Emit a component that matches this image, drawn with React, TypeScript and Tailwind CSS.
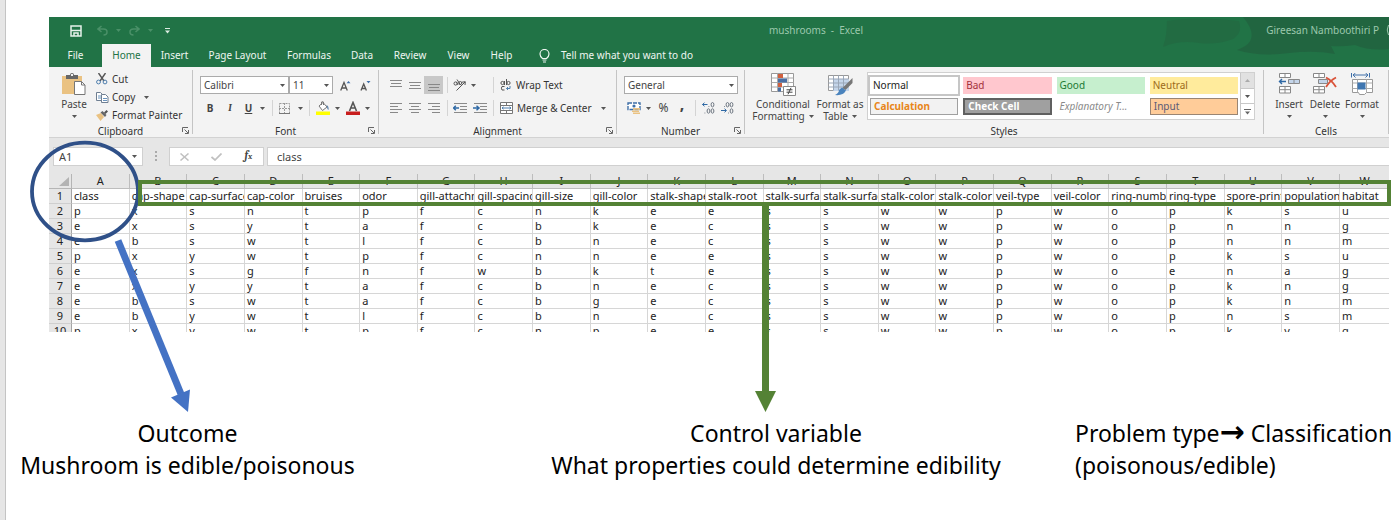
import React from "react";

const COLUMNS = "ABCDEFGHIJKLMNOPQRSTUVW".split("");

const ROWS: string[][] = [
  [
    "class", "cap-shape", "cap-surface", "cap-color", "bruises", "odor", "gill-attachment", "gill-spacing",
    "gill-size", "gill-color", "stalk-shape", "stalk-root", "stalk-surface", "stalk-surface", "stalk-color",
    "stalk-color", "veil-type", "veil-color", "ring-number", "ring-type", "spore-print", "population", "habitat",
  ],
  "pxsntpfcnkeesswwpwopksu".split(""),
  "exsytafcbkecsswwpwopnng".split(""),
  "ebswtlfcbnecsswwpwopnnm".split(""),
  "pxywtpfcnneesswwpwopksu".split(""),
  "exsgfnfwbktesswwpwoenag".split(""),
  "exyytafcbnecsswwpwopkng".split(""),
  "ebswtafcbgecsswwpwopknm".split(""),
  "ebywtlfcbnecsswwpwopnsm".split(""),
  "pxywtpfcnpeesswwpwopkvg".split(""),
];

const TABS = [
  { label: "File", width: "w-[53px]" },
  { label: "Home", width: "w-[49px]" },
  { label: "Insert", width: "w-[47px]" },
  { label: "Page Layout", width: "w-[79px]" },
  { label: "Formulas", width: "w-[64px]" },
  { label: "Data", width: "w-[42px]" },
  { label: "Review", width: "w-[54px]" },
  { label: "View", width: "w-[43px]" },
  { label: "Help", width: "w-[43px]" },
];

const STYLES = [
  { label: "Normal", look: "bg-white text-[#222] outline-2 outline-[#c6c6c6]" },
  { label: "Bad", look: "bg-[#ffc7ce] text-[#a3313b]" },
  { label: "Good", look: "bg-[#c6efce] text-[#217a34]" },
  { label: "Neutral", look: "bg-[#ffeb9c] text-[#9c6a1a]" },
  { label: "Calculation", look: "bg-[#f2f2f2] font-bold text-[#e8861a] border border-[#a0a0a0]" },
  { label: "Check Cell", look: "bg-[#a0a0a0] font-bold text-white border-2 border-[#606060]" },
  { label: "Explanatory T...", look: "italic text-[#8a8a8a]" },
  { label: "Input", look: "bg-[#ffcc99] text-[#5a5a76] border border-[#9a8573]" },
];

function Caret({ className = "text-[#555]" }: { className?: string }) {
  return (
    <svg width="5" height="3" viewBox="0 0 5 3" className={`shrink-0 ${className}`} aria-hidden="true">
      <path d="M0 0h5L2.5 3z" fill="currentColor" />
    </svg>
  );
}

function Launcher() {
  return (
    <svg width="7" height="7" viewBox="0 0 7 7" fill="none" stroke="#666" aria-hidden="true">
      <path d="M.5 5V.5H6M2.5 2.5L6 6M6.5 3v3.5H3" />
    </svg>
  );
}

function Divider() {
  return <span className="h-4 w-px shrink-0 bg-[#d4d4d4]" />;
}

function Group({
  title, width, launcher, children,
}: { title: string; width: string; launcher?: boolean; children: React.ReactNode }) {
  return (
    <section aria-label={title} className={`flex shrink-0 pt-[3px] ${width}`}>
      <div className="flex min-w-0 flex-1 flex-col">
        <div className="flex-1">{children}</div>
        <div className="relative flex h-3 items-center justify-center leading-3 text-[#333]">
          {title}
          {launcher && (
            <button aria-label={`${title} settings`} className="absolute right-[3px] top-[2px]">
              <Launcher />
            </button>
          )}
        </div>
      </div>
      <span className="mb-[3px] w-px bg-[#c4c4c4]" />
    </section>
  );
}

function Combo({ label, value, width }: { label: string; value: string; width: string }) {
  return (
    <div className={`relative h-[18px] ${width}`}>
      <select
        aria-label={label}
        defaultValue={value}
        className="h-full w-full appearance-none border border-[#ababab] bg-white px-[3px] leading-4 text-[#444]"
      >
        <option>{value}</option>
      </select>
      <span className="pointer-events-none absolute right-1 top-2">
        <Caret />
      </span>
    </div>
  );
}

function IconButton({ label, className = "", children }: { label: string; className?: string; children: React.ReactNode }) {
  return (
    <button aria-label={label} className={`flex h-[18px] shrink-0 items-center justify-center ${className}`}>
      {children}
    </button>
  );
}

function Lines({ ys, xs }: { ys: number[]; xs: [number, number][] }) {
  return (
    <svg width="12" height="12" viewBox="0 0 12 12" stroke="#888" aria-hidden="true">
      {ys.map((y, i) => (
        <path key={y} d={`M${xs[i][0]} ${y}.5H${xs[i][1]}`} />
      ))}
    </svg>
  );
}

function PasteIcon() {
  return (
    <svg width="24" height="22" viewBox="0 0 24 22" aria-hidden="true">
      <path d="M0 3h20v18H0z" fill="#eac282" />
      <path d="M4 2h4a2 2 0 0 1 4 0h4v4H4z" fill="#666" />
      <path d="M9 1h2v2H9z" fill="#f3f3f3" />
      <path d="M12.500 8.500h7l3.500 3.500v9.500h-10.500z" fill="#fff" stroke="#777" />
      <path d="M19.500 8.500v3.500H23" fill="none" stroke="#777" />
    </svg>
  );
}

function CutIcon() {
  return (
    <svg width="12" height="12" viewBox="0 0 12 12" fill="none" aria-hidden="true">
      <path d="M2.500 0l5.500 8M9.500 0L4 8" stroke="#555" strokeWidth="1.400" />
      <circle cx="2.500" cy="9" r="1.900" stroke="#4f7fae" />
      <circle cx="9" cy="9" r="1.900" stroke="#4f7fae" />
    </svg>
  );
}

function CopyIcon() {
  return (
    <svg width="13" height="11" viewBox="0 0 13 11" fill="#fff" stroke="#6f7f92" aria-hidden="true">
      <path d="M.5 .5h4l2 2v6h-6z" />
      <path d="M2 4h3M2 6h3" stroke="#6b94bd" />
      <path d="M5.500 2.500h4l2.500 2.500v5.500H5.500z" />
      <path d="M7 6.500h4M7 8.500h4" stroke="#6b94bd" />
    </svg>
  );
}

function PainterIcon() {
  return (
    <svg width="12" height="11" viewBox="0 0 12 11" aria-hidden="true">
      <path d="M0 5l5-2 3 4-3.500 4z" fill="#eac282" />
      <path d="M4.500 2.500L6.500 1l4 4-1.500 2z" fill="#666" />
      <path d="M8 2.500L10.500 0 12 1.500 9.500 4z" fill="#555" />
    </svg>
  );
}

function BordersIcon() {
  return (
    <svg width="11" height="11" viewBox="0 0 11 11" fill="none" stroke="#999" aria-hidden="true">
      <path d="M.5 .5h10v10H.5zM5.500 0v11M0 5.500h11" strokeDasharray="2 1" />
      <path d="M0 10.500h11" stroke="#777" />
    </svg>
  );
}

function FillIcon() {
  return (
    <svg width="14" height="14" viewBox="0 0 14 14" fill="none" aria-hidden="true">
      <path d="M3 5l4-3.500L11 6 6.500 9.500z" fill="#fff" stroke="#777" />
      <path d="M5.500 4V1q1-1 2 0v3" stroke="#777" />
      <path d="M10 4q3 .5 2.500 5-1.500-1-1.500-4z" fill="#4a76a5" />
      <path d="M0 10.500h14v3.500H0z" fill="#ffff00" />
    </svg>
  );
}

function FontColorIcon() {
  return (
    <svg width="14" height="14" viewBox="0 0 14 14" fill="none" aria-hidden="true">
      <path d="M3.500 10L7 1.500 10.500 10M4.700 7h4.600" stroke="#555" strokeWidth="1.600" />
      <path d="M0 10.500h14v3.500H0z" fill="#c81e1e" />
    </svg>
  );
}

function GrowIcon({ down }: { down?: boolean }) {
  return (
    <svg width="11" height="11" viewBox="0 0 11 11" fill="none" aria-hidden="true">
      {down ? (
        <path d="M1 10.500l2.700-6.500 2.700 6.500M2 8.500h3.500" stroke="#555" strokeWidth="1.300" />
      ) : (
        <path d="M.7 10.500L4 2.500l3.300 8M2 8h4" stroke="#555" strokeWidth="1.300" />
      )}
      {down ? <path d="M6.500 1h4L8.500 3.200z" fill="#3f6fa8" /> : <path d="M6.500 3.200h4L8.500 1z" fill="#3f6fa8" />}
    </svg>
  );
}

function OrientationIcon() {
  return (
    <svg width="13" height="12" viewBox="0 0 13 12" fill="none" stroke="#555" aria-hidden="true">
      <path d="M3.500 11.500L12 3M9 3.200L12.300 2.700 12 6" />
      <circle cx="2.600" cy="4.500" r="1.600" />
      <path d="M3.500 3l1.500 3M4 .5L7.500 6" />
      <circle cx="7.300" cy="4" r="1.500" />
    </svg>
  );
}

function IndentIcon({ right }: { right?: boolean }) {
  return (
    <svg width="14" height="11" viewBox="0 0 14 11" fill="none" stroke="#8a8a8a" aria-hidden="true">
      <path d="M1 .5h13M7 3.500h7M7 6.500h7M1 9.500h13" />
      <path
        d={right ? "M0 5h5.500M3.500 2.800L6 5 3.500 7.200" : "M6 5H.5M2.800 2.800L.5 5 2.800 7.200"}
        stroke="#2f69a5"
        strokeWidth="1.500"
      />
    </svg>
  );
}

function WrapIcon() {
  return (
    <svg width="12" height="12" viewBox="0 0 12 12" fill="none" stroke="#555" aria-hidden="true">
      <circle cx="2.500" cy="4" r="1.600" />
      <path d="M4.500 2v4M6.500 0v6" />
      <circle cx="8.500" cy="4" r="1.600" />
      <path d="M4.500 7.500H2q-1.200 1.600 0 3.500h2.500" />
      <path d="M10 7v2.500H6.500M8 8L6.500 9.500 8 11" stroke="#4f7fae" />
    </svg>
  );
}

function MergeIcon() {
  return (
    <svg width="13" height="12" viewBox="0 0 13 12" fill="#fff" stroke="#777" aria-hidden="true">
      <path d="M.5 .5h12v11H.5zM.5 3.500h12M.5 8.500h12M6.500 .5v3M6.500 8.500v3" />
      <path d="M2 6h9M3.500 4.800L2 6l1.500 1.200M9.500 4.800L11 6 9.500 7.200" stroke="#4f7fae" fill="none" />
    </svg>
  );
}

function CurrencyIcon() {
  return (
    <svg width="14" height="12" viewBox="0 0 14 12" fill="none" aria-hidden="true">
      <path d="M1 1h12v6.500H1z" fill="#fff" stroke="#3f6fa8" strokeWidth="1.400" strokeDasharray="4 1" />
      <circle cx="7" cy="4" r="1.600" fill="#3f6fa8" />
      <path d="M6 6h7v1.800H6zM5 8.500h7v1.400H5zM6 10.500h7V12H6z" fill="#eac282" />
    </svg>
  );
}

function DecimalIcon({ decrease }: { decrease?: boolean }) {
  return (
    <svg width="13" height="12" viewBox="0 0 13 12" fill="none" stroke="#6c7580" aria-hidden="true">
      {decrease ? (
        <>
          <path d="M3 4.500h.8" />
          <ellipse cx="6.500" cy="2.700" rx="1.400" ry="2.200" />
          <ellipse cx="10.500" cy="2.700" rx="1.400" ry="2.200" />
          <ellipse cx="10.500" cy="9" rx="1.400" ry="2.200" />
          <path d="M7 11h.8" />
          <path d="M0 8.500h5M3.500 6.700l2 1.800-2 1.800" stroke="#2f69a5" />
        </>
      ) : (
        <>
          <path d="M6.500 4.500h.8M2.500 11h.8" />
          <ellipse cx="10.500" cy="2.700" rx="1.400" ry="2.200" />
          <ellipse cx="6.500" cy="9" rx="1.400" ry="2.200" />
          <ellipse cx="10.500" cy="9" rx="1.400" ry="2.200" />
          <path d="M5.500 2.500h-5M2.500 .7l-2 1.800 2 1.800" stroke="#2f69a5" />
        </>
      )}
    </svg>
  );
}

function ConditionalIcon() {
  return (
    <svg width="25" height="23" viewBox="0 0 25 23" aria-hidden="true">
      <path d="M.5 .5h22v18H.5z" fill="#fff" stroke="#999" />
      <path d="M.5 5h22M.5 9.500h22M.5 14h22M6.500 .5v18M17 .5v18" stroke="#aaa" fill="none" />
      <path d="M7 1h5v4H7zM7 10h4v4H7z" fill="#d0603f" />
      <path d="M7 5.500h9v4H7zM7 14.500h3v4H7z" fill="#4a6ea3" />
      <path d="M12.500 13.500h12v9h-12z" fill="#fff" stroke="#888" />
      <path d="M15.500 16.800h6M15.500 19.200h6M20 14.800l-3 6.500" stroke="#444" fill="none" />
    </svg>
  );
}

function TableIcon() {
  return (
    <svg width="25" height="23" viewBox="0 0 25 23" aria-hidden="true">
      <path d="M.5 2.500h20v15H.5z" fill="#fff" stroke="#999" />
      <path d="M5 6h16v12H5z" fill="#c4d5ea" />
      <path d="M.5 6h20M.5 10h20M.5 14h20M5.500 2.500v15M10.500 2.500v15M15.500 2.500v15" stroke="#9aa7b8" fill="none" />
      <path d="M24.500 5v5l-7 7-3-2z" fill="#777" />
      <path d="M14 14.500l4 3q-3 5.500-11 4.500 4-2 4-5z" fill="#4a83bd" />
    </svg>
  );
}

function InsertCellsIcon() {
  return (
    <svg width="22" height="21" viewBox="0 0 22 21" fill="#fff" stroke="#888" aria-hidden="true">
      <path d="M1.500 .5h11v4h-11zM7 .5v4" />
      <path d="M10.500 6.500h11v4h-11zM16 6.500v4" fill="#c4d5ea" />
      <path d="M1.500 13.500h11v6.500h-11zM7 13.500V20M1.500 16.700h11" />
      <path d="M8 8.500H1.500M4 6L1.500 8.500 4 11" fill="none" stroke="#2f69a5" strokeWidth="1.400" />
    </svg>
  );
}

function DeleteCellsIcon() {
  return (
    <svg width="24" height="21" viewBox="0 0 24 21" fill="#fff" stroke="#888" aria-hidden="true">
      <path d="M.5 .5h11v4H.5zM6 .5v4" />
      <path d="M5.500 6.500h9v4h-9z" fill="#c4d5ea" />
      <path d="M.5 13.500h11v6.500H.5zM6 13.500V20M.5 16.700h11" />
      <path d="M13 4.500q6 3 10 9.500M23 4.500q-6 3-10 9.500" fill="none" stroke="#d9533a" strokeWidth="1.800" />
    </svg>
  );
}

function FormatCellsIcon() {
  return (
    <svg width="23" height="23" viewBox="0 0 23 23" fill="none" aria-hidden="true">
      <path d="M.5 0v4.500M18.500 0v4.500M2 2h15M4.500 0L2 2l2.500 2.500M14.500 0L17 2l-2.500 2.500" stroke="#3f6fa8" />
      <path d="M1.500 6.500h20v13h-6l-2 2h-5l-1-2h-6z" fill="#fff" stroke="#999" />
      <path d="M1.500 10h20M1.500 15.500h20M6.500 6.500v13M15.500 6.500v13" stroke="#aaa" />
      <path d="M6.500 9.500h8v7h-8z" fill="#3f76b0" />
    </svg>
  );
}

function BigButton({ icon, lines, width }: { icon: React.ReactNode; lines: string[]; width: string }) {
  const two = lines.length > 1;
  return (
    <button className={`flex flex-col items-center pt-[3px] leading-3 text-[#444] ${width}`}>
      <span className="flex h-6">{icon}</span>
      <span className="whitespace-nowrap pt-px">{lines[0]}</span>
      {two ? (
        <span className="flex items-center gap-1 whitespace-nowrap">
          {lines[1]}
          <Caret />
        </span>
      ) : (
        <span className="flex h-3 items-center">
          <Caret />
        </span>
      )}
    </button>
  );
}

function TitleBar() {
  return (
    <header className="relative flex h-[27px] items-center text-[#9cc8ad]">
      <svg className="absolute right-0 top-0" width="230" height="50" viewBox="0 0 230 50" fill="#23593c" aria-hidden="true">
        <path d="M8 4q30-5 72 0 4 12-6 18-16 6-34 4-20-3-36 4 4-12 4-26z" opacity=".3" />
        <path d="M84 0h146v32q-20 2-34-4-14 2-24 1l4 8q-20-4-46-1-30 4-52-3 26-9 6-33z" opacity=".55" />
        <path d="M229.500 8q-2.500 5 0 10" fill="none" stroke="#9cc8ad" />
      </svg>
      <div className="relative flex w-[720px] items-center">
        <button aria-label="Save" className="ml-[21px]">
          <svg width="12" height="12" viewBox="0 0 12 12" fill="none" stroke="#e6f2ea" strokeWidth="1.500">
            <path d="M1 1h10v10H1zM1 5.500h10M4 11V8h4v3" />
          </svg>
        </button>
        <button aria-label="Undo" className="ml-[15px] flex items-center gap-2 text-[#4a9068]">
          <svg width="11" height="11" viewBox="0 0 11 11" fill="none" stroke="currentColor" strokeWidth="1.500">
            <path d="M4.500 1L1 4l3.500 3M1 4h5.500q3.500 0 3.500 3t-3.500 3" />
          </svg>
          <Caret className="" />
        </button>
        <button aria-label="Redo" className="ml-2 flex items-center gap-2 text-[#4a9068]">
          <svg width="11" height="11" viewBox="0 0 11 11" fill="none" stroke="currentColor" strokeWidth="1.500">
            <path d="M6.500 1L10 4 6.500 7M10 4H4.500Q1 4 1 7t3.500 3" />
          </svg>
          <Caret className="" />
        </button>
        <button aria-label="Customize toolbar" className="ml-3">
          <svg width="5" height="6" viewBox="0 0 5 6" fill="#dcece2">
            <path d="M0 0h5v1H0zM0 2.500h5L2.500 5.500z" />
          </svg>
        </button>
      </div>
      <h1 className="relative whitespace-pre">mushrooms  -  Excel</h1>
      <span className="relative ml-auto mr-[10px] whitespace-nowrap">Gireesan Namboothiri P</span>
    </header>
  );
}

function TabBar() {
  return (
    <nav className="relative flex h-[23px] items-stretch text-[#eef6f1]">
      {TABS.map((tab) => (
        <button
          key={tab.label}
          className={`${tab.width} ${tab.label === "Home" ? "bg-[#f3f3f3] text-[#217346]" : ""} shrink-0 whitespace-nowrap`}
        >
          {tab.label}
        </button>
      ))}
      <button className="ml-4 flex items-center gap-[11px] whitespace-nowrap">
        <svg width="11" height="14" viewBox="0 0 11 14" fill="none" stroke="#eef6f1" strokeWidth="1.200" aria-hidden="true">
          <path d="M3.500 9.500Q1 7.500 1 5a4.500 4.500 0 0 1 9 0q0 2.500-2.500 4.500zM3.500 11h4M4 13h3" />
        </svg>
        Tell me what you want to do
      </button>
    </nav>
  );
}

function Ribbon() {
  return (
    <div className="flex h-[71px] border-b border-[#d2d2d2] bg-[#f3f3f3]">
      <Group title="Clipboard" width="w-[144px]" launcher>
        <div className="flex pl-[10px]">
          <BigButton icon={<PasteIcon />} lines={["Paste"]} width="w-[30px]" />
          <div className="flex flex-col pl-[7px] leading-[18px] text-[#333]">
            <button className="flex items-center gap-1">
              <CutIcon />
              Cut
            </button>
            <button className="flex items-center gap-[3px]">
              <CopyIcon />
              Copy
              <span className="pl-[6px]">
                <Caret />
              </span>
            </button>
            <button className="flex items-center gap-1 whitespace-nowrap">
              <PainterIcon />
              Format Painter
            </button>
          </div>
        </div>
      </Group>

      <Group title="Font" width="w-[186px]" launcher>
        <div className="flex flex-col gap-[5px] pl-[7px] pt-[6px]">
          <div className="flex items-center">
            <Combo label="Font name" value="Calibri" width="w-[89px]" />
            <Combo label="Font size" value="11" width="w-[44px]" />
            <IconButton label="Increase font size" className="ml-[6px] w-3">
              <GrowIcon />
            </IconButton>
            <IconButton label="Decrease font size" className="ml-2 w-3">
              <GrowIcon down />
            </IconButton>
          </div>
          <div className="flex items-center text-[#444]">
            <IconButton label="Bold" className="w-5 font-bold">B</IconButton>
            <IconButton label="Italic" className="w-5 font-serif font-bold italic">I</IconButton>
            <IconButton label="Underline" className="w-[30px] gap-2 font-bold">
              <span className="underline">U</span>
              <Caret />
            </IconButton>
            <span className="w-[2px]" />
            <Divider />
            <IconButton label="Borders" className="w-9 gap-2">
              <BordersIcon />
              <Caret />
            </IconButton>
            <Divider />
            <IconButton label="Fill color" className="w-9 gap-[5px]">
              <FillIcon />
              <Caret />
            </IconButton>
            <IconButton label="Font color" className="w-6 gap-[5px]">
              <FontColorIcon />
              <Caret />
            </IconButton>
          </div>
        </div>
      </Group>

      <Group title="Alignment" width="w-[238px]" launcher>
        <div className="flex flex-col gap-[5px] pl-[7px] pt-[6px] text-[#333]">
          <div className="flex items-center">
            <IconButton label="Top align" className="w-[19px]">
              <Lines ys={[1, 4, 7]} xs={[[0, 12], [1, 11], [0, 12]]} />
            </IconButton>
            <IconButton label="Middle align" className="w-[19px]">
              <Lines ys={[3, 6, 9]} xs={[[0, 12], [1, 11], [0, 12]]} />
            </IconButton>
            <IconButton label="Bottom align" className="w-[19px] bg-[#c8c8c8]">
              <Lines ys={[5, 8, 11]} xs={[[0, 12], [1, 11], [0, 12]]} />
            </IconButton>
            <span className="w-1" />
            <Divider />
            <IconButton label="Orientation" className="w-[33px] gap-[5px]">
              <OrientationIcon />
              <Caret />
            </IconButton>
            <span className="w-3" />
            <Divider />
            <button className="ml-[6px] flex h-[18px] items-center gap-1 whitespace-nowrap">
              <WrapIcon />
              Wrap Text
            </button>
          </div>
          <div className="flex items-center">
            <IconButton label="Align left" className="w-[19px]">
              <Lines ys={[1, 4, 7, 10]} xs={[[0, 12], [0, 8], [0, 12], [0, 8]]} />
            </IconButton>
            <IconButton label="Center" className="w-[19px]">
              <Lines ys={[1, 4, 7, 10]} xs={[[0, 12], [2, 10], [0, 12], [2, 10]]} />
            </IconButton>
            <IconButton label="Align right" className="w-[19px]">
              <Lines ys={[1, 4, 7, 10]} xs={[[0, 12], [4, 12], [0, 12], [4, 12]]} />
            </IconButton>
            <span className="w-1" />
            <Divider />
            <IconButton label="Decrease indent" className="w-6">
              <IndentIcon />
            </IconButton>
            <IconButton label="Increase indent" className="w-[15px]">
              <IndentIcon right />
            </IconButton>
            <span className="w-[6px]" />
            <Divider />
            <button className="ml-[6px] flex h-[18px] items-center gap-1 whitespace-nowrap">
              <MergeIcon />
              Merge &amp; Center
              <span className="pl-[5px]">
                <Caret />
              </span>
            </button>
          </div>
        </div>
      </Group>

      <Group title="Number" width="w-[128px]" launcher>
        <div className="flex flex-col gap-[5px] pl-[7px] pt-[6px]">
          <Combo label="Number format" value="General" width="w-[114px]" />
          <div className="flex items-center text-[#444]">
            <IconButton label="Accounting format" className="w-[30px] gap-[5px]">
              <CurrencyIcon />
              <Caret />
            </IconButton>
            <IconButton label="Percent style" className="w-[19px] text-xs">%</IconButton>
            <IconButton label="Comma style" className="w-[18px] pb-2 text-base font-bold">,</IconButton>
            <span className="w-[4px]" />
            <Divider />
            <IconButton label="Increase decimal" className="w-6">
              <DecimalIcon />
            </IconButton>
            <IconButton label="Decrease decimal" className="w-[14px]">
              <DecimalIcon decrease />
            </IconButton>
          </div>
        </div>
      </Group>

      <Group title="Styles" width="min-w-[518px] flex-1">
        <div className="flex pl-2">
          <BigButton icon={<ConditionalIcon />} lines={["Conditional", "Formatting"]} width="w-[60px]" />
          <BigButton icon={<TableIcon />} lines={["Format as", "Table"]} width="w-[54px]" />
          <div className="mr-2 mt-[2px] flex h-12 flex-1 border border-[#d0d0d0] bg-white">
            <div className="grid flex-1 grid-cols-4 gap-x-[5px] gap-y-[4px] px-[2px] pt-1 pb-1">
              {STYLES.map((style) => (
                <button
                  key={style.label}
                  className={`flex h-[17px] items-center overflow-hidden whitespace-nowrap px-[3px] text-left ${style.look}`}
                >
                  {style.label}
                </button>
              ))}
            </div>
            <div className="flex w-[14px] flex-col divide-y divide-[#c8c8c8] border-l border-[#c8c8c8]">
              <button aria-label="Previous styles" className="flex flex-1 items-center justify-center bg-[#e1e1e1]">
                <svg width="5" height="3" viewBox="0 0 5 3" fill="#aaa"><path d="M0 3h5L2.500 0z" /></svg>
              </button>
              <button aria-label="Next styles" className="flex flex-1 items-center justify-center">
                <Caret />
              </button>
              <button aria-label="All styles" className="flex flex-1 items-center justify-center">
                <svg width="7" height="6" viewBox="0 0 7 6" fill="#666"><path d="M0 0h7v1H0zM1 2.500h5L3.500 5.500z" /></svg>
              </button>
            </div>
          </div>
        </div>
      </Group>

      <Group title="Cells" width="w-[125px]">
        <div className="flex pl-[7px]">
          <BigButton icon={<InsertCellsIcon />} lines={["Insert"]} width="w-9" />
          <BigButton icon={<DeleteCellsIcon />} lines={["Delete"]} width="w-9" />
          <BigButton icon={<FormatCellsIcon />} lines={["Format"]} width="w-[38px]" />
        </div>
      </Group>
    </div>
  );
}

function FormulaBar() {
  return (
    <div className="flex h-[28px] items-end bg-[#e6e6e6] pl-1 text-[#444]">
      <div className="relative h-[19px] w-[90px]">
        <input
          aria-label="Name box"
          defaultValue="A1"
          className="h-full w-full border border-[#d0d0d0] bg-white px-[5px] text-[11px]"
        />
        <span className="pointer-events-none absolute right-[6px] top-2">
          <Caret />
        </span>
      </div>
      <svg width="2" height="10" viewBox="0 0 2 10" fill="#aaa" className="mx-3 mb-[5px]" aria-hidden="true">
        <path d="M0 0h2v2H0zM0 4h2v2H0zM0 8h2v2H0z" />
      </svg>
      <div className="mr-[3px] flex h-[19px] w-[95px] items-center justify-between border border-[#d0d0d0] bg-white pl-[10px] pr-[11px]">
        <button aria-label="Cancel">
          <svg width="9" height="8" viewBox="0 0 9 8" fill="none" stroke="#c0c0c0" strokeWidth="1.500"><path d="M.5 .5l8 7M8.500 .5l-8 7" /></svg>
        </button>
        <button aria-label="Enter">
          <svg width="11" height="8" viewBox="0 0 11 8" fill="none" stroke="#c0c0c0" strokeWidth="1.700"><path d="M.5 4l3.500 3L10.500 .5" /></svg>
        </button>
        <button aria-label="Insert function" className="font-serif text-[11px] font-bold italic leading-3">
          f<span className="text-[8px]">x</span>
        </button>
      </div>
      <input
        aria-label="Formula"
        defaultValue="class"
        className="h-[19px] min-w-0 flex-1 border border-r-0 border-[#d0d0d0] bg-white px-[9px] text-[11px]"
      />
    </div>
  );
}

function Sheet() {
  return (
    <div className="h-[166px] overflow-hidden bg-[#e6e6e6] pt-2 text-[11px] leading-[14px] text-[#222]">
      <table className="w-full table-fixed border-separate border-spacing-0 bg-white">
        <colgroup>
          <col className="w-[23px]" />
          {COLUMNS.map((c) => (
            <col key={c} className={c === "W" ? "w-[49px]" : ""} />
          ))}
        </colgroup>
        <thead>
          <tr className="h-[15px] bg-[#e6e6e6]">
            <th aria-label="Select all" className="border-b border-r border-[#b5b5b5] p-0">
              <svg width="10" height="9" viewBox="0 0 10 9" className="ml-[10px]" aria-hidden="true">
                <path d="M10 0v9H0z" fill="#b3b3b3" />
              </svg>
            </th>
            {COLUMNS.map((c) => (
              <th key={c} scope="col" className="border-b border-r border-[#bdbdbd] p-0 font-normal last:border-r-0">
                {c}
              </th>
            ))}
          </tr>
        </thead>
        <tbody>
          {ROWS.map((row, r) => (
            <tr key={r} className="h-[15px]">
              <th scope="row" className="border-b border-r border-b-[#cfcfcf] border-r-[#a5a5a5] bg-[#e6e6e6] p-0 font-normal">
                {r + 1}
              </th>
              {row.map((cell, c) => (
                <td
                  key={c}
                  className="overflow-hidden whitespace-nowrap border-b border-r border-[#d6d6d6] p-0 pl-[2px] last:border-r-0"
                >
                  {cell}
                </td>
              ))}
            </tr>
          ))}
        </tbody>
      </table>
    </div>
  );
}

function Annotations() {
  return (
    <div className="pointer-events-none absolute inset-0">
      <svg className="absolute left-0 top-0" width="220" height="420" viewBox="0 0 220 420" fill="none" aria-hidden="true">
        <ellipse cx="85" cy="191.500" rx="53" ry="48.800" stroke="#2f5088" strokeWidth="3.800" />
        <path d="M118 240.500L181 394" stroke="#4472c4" strokeWidth="7" />
        <path d="M171 397.500L190 389.500 188 412z" fill="#4472c4" />
      </svg>
      <div className="absolute left-[138px] right-[7px] top-[180px] h-[26px] border-4 border-[#548235]" />
      <svg className="absolute left-[54%] top-[204px]" width="21" height="208" viewBox="0 0 21 208" fill="#548235" aria-hidden="true">
        <path d="M7 0h7v187h7L10.500 208 0 187h7z" />
      </svg>
    </div>
  );
}

export default function App() {
  return (
    <div className="relative min-h-screen overflow-hidden bg-white pl-[49px] pr-[9px] pt-[17px] font-['Noto_Sans',sans-serif] text-[10px]">
      <div className="absolute inset-y-0 left-0 w-[6px] border-r border-[#c4c4c4] bg-[#e6e6e6]" />
      <main>
        <div className="bg-[#217346]">
          <TitleBar />
          <TabBar />
        </div>
        <Ribbon />
        <FormulaBar />
        <Sheet />
      </main>
      <section className="-ml-[49px] -mr-[9px] mt-[85px] grid grid-cols-[375fr_102fr_598fr_323fr] whitespace-nowrap text-[23px] leading-8 text-black">
        <p className="text-center">
          Outcome
          <br />
          Mushroom is edible/poisonous
        </p>
        <span />
        <p className="text-center">
          Control variable
          <br />
          What properties could determine edibility
        </p>
        <p>
          Problem type<span className="font-['DejaVu_Sans'] text-[30px] font-bold leading-none">→</span> Classification
          <br />
          (poisonous/edible)
        </p>
      </section>
      <Annotations />
    </div>
  );
}
